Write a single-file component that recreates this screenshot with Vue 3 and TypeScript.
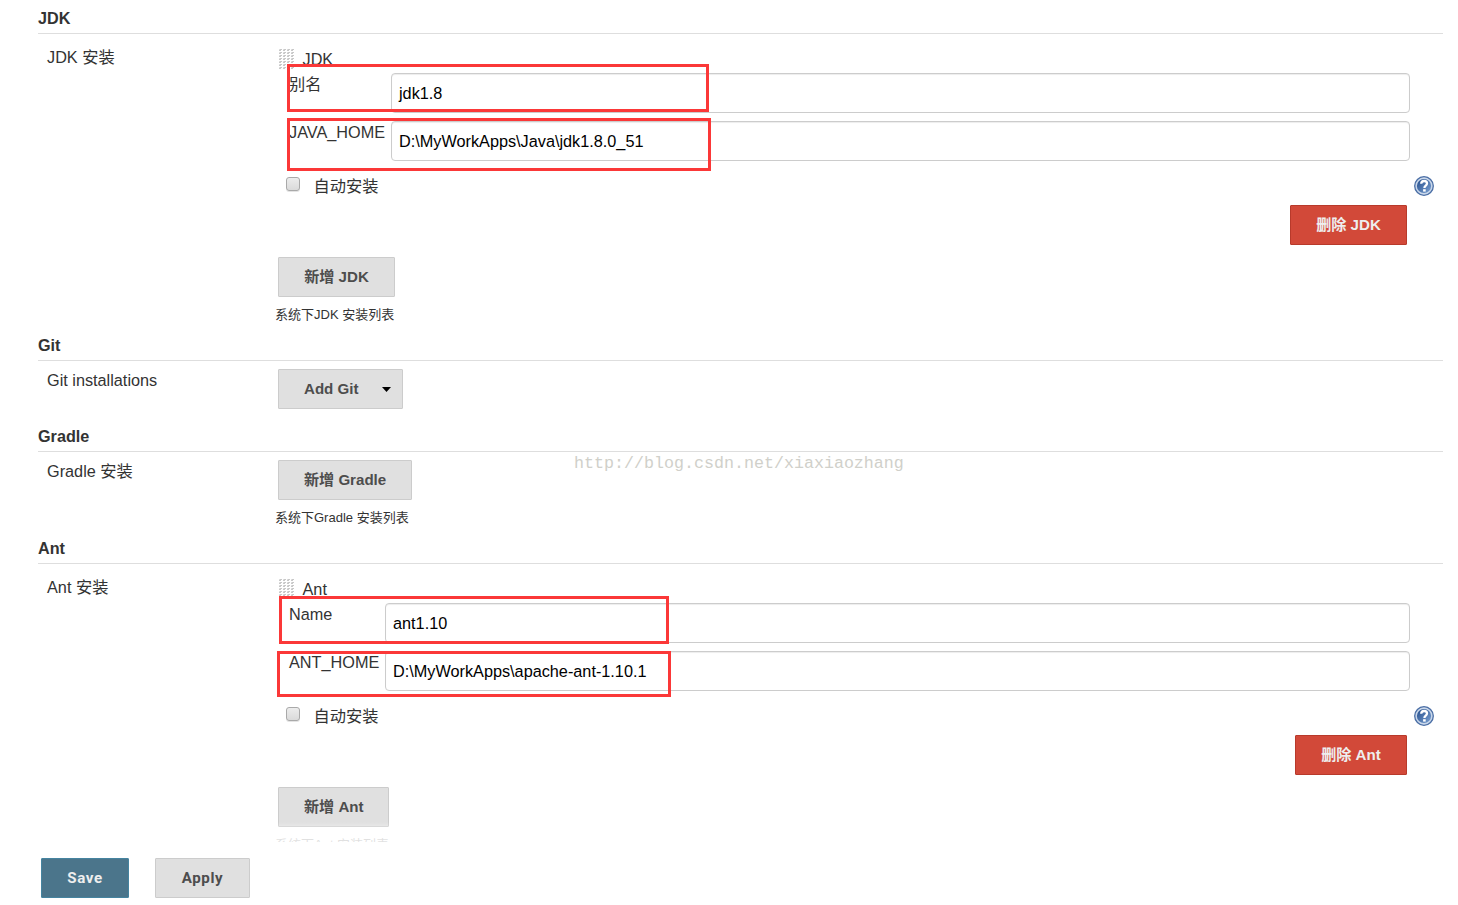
<script setup lang="ts">
interface Field {
  label: string
  value: string
}
interface Tool {
  key: string
  title: string
  label: string
  fields?: Field[]
  remove?: string
  add: string
  menu?: boolean
  note?: string
}

const tools: Tool[] = [
  {
    key: 'jdk',
    title: 'JDK',
    label: 'JDK 安装',
    fields: [
      { label: '别名', value: 'jdk1.8' },
      { label: 'JAVA_HOME', value: 'D:\\MyWorkApps\\Java\\jdk1.8.0_51' },
    ],
    remove: '删除 JDK',
    add: '新增 JDK',
    note: '系统下JDK 安装列表',
  },
  { key: 'git', title: 'Git', label: 'Git installations', add: 'Add Git', menu: true },
  { key: 'gradle', title: 'Gradle', label: 'Gradle 安装', add: '新增 Gradle', note: '系统下Gradle 安装列表' },
  {
    key: 'ant',
    title: 'Ant',
    label: 'Ant 安装',
    fields: [
      { label: 'Name', value: 'ant1.10' },
      { label: 'ANT_HOME', value: 'D:\\MyWorkApps\\apache-ant-1.10.1' },
    ],
    remove: '删除 Ant',
    add: '新增 Ant',
    note: '系统下Ant 安装列表',
  },
]
</script>

<template>
  <div class="page">
    <main class="config">
      <section v-for="t in tools" :key="t.key" class="tool" :class="t.key">
        <h2>{{ t.title }}</h2>
        <div class="body">
          <div class="label" :class="{ low: t.fields }">{{ t.label }}</div>
          <div class="content">
            <div v-if="t.fields" class="install">
              <div class="head">
                <svg class="grip" width="15" height="21" viewBox="0 0 15 21" shape-rendering="crispEdges">
                  <template v-for="r in 7" :key="r">
                    <template v-for="c in 4" :key="c">
                      <rect :x="c * 4 - 4" :y="r * 3 - 3" width="2" height="2" fill="#dedede" />
                      <rect :x="c * 4 - 3" :y="r * 3 - 3" width="2" height="1" fill="#c8c8c8" />
                      <rect :x="c * 4 - 4" :y="r * 3 - 2" width="2" height="1" fill="#c8c8c8" />
                    </template>
                  </template>
                </svg>
                <span>{{ t.title }}</span>
              </div>
              <div v-for="(f, i) in t.fields" :key="f.label" class="field">
                <label>{{ f.label }}</label>
                <div class="input">{{ f.value }}</div>
                <div class="mark" :class="'mark' + i"></div>
              </div>
              <div class="auto">
                <span class="check"></span>
                <span class="auto-text">自动安装</span>
                <svg class="help" width="20" height="20" viewBox="0 0 20 20">
                  <defs>
                    <linearGradient :id="'g-' + t.key" x1="0" y1="0" x2="1" y2="1">
                      <stop offset="0" stop-color="#244d8b" />
                      <stop offset="1" stop-color="#7ba1d2" />
                    </linearGradient>
                  </defs>
                  <circle cx="10" cy="10" r="9.3" fill="#c9d7ea" stroke="#4a6ea5" stroke-width="1.3" />
                  <circle cx="10" cy="10" r="7.1" :fill="'url(#g-' + t.key + ')'" />
                  <path d="M7.2 7.7C7.3 5.8 8.4 5 10.1 5c1.8 0 2.9.9 2.9 2.5 0 2.1-2.6 2-2.6 4.4" fill="none" stroke="#fff" stroke-width="2.3" />
                  <rect x="9.1" y="13.2" width="2.6" height="2.4" fill="#fff" />
                </svg>
              </div>
              <div class="remove"><button class="btn danger">{{ t.remove }}</button></div>
            </div>
            <button class="btn add" :class="{ menu: t.menu }">
              {{ t.add }}
              <svg v-if="t.menu" width="9" height="5" viewBox="0 0 9 5"><path d="M0 0H9L4.5 5Z" fill="#000" /></svg>
            </button>
            <div v-if="t.note" class="note">{{ t.note }}</div>
          </div>
        </div>
      </section>
    </main>
    <footer class="bar">
      <button class="btn primary">Save</button>
      <button class="btn">Apply</button>
    </footer>
    <div class="watermark">http://blog.csdn.net/xiaxiaozhang</div>
  </div>
</template>

<style>
body {
  margin: 0;
  background: #fff;
  overflow: hidden;
}
</style>

<style scoped>
.page {
  position: relative;
  display: flex;
  flex-direction: column;
  width: 1458px;
  height: 905px;
  overflow: hidden;
  box-sizing: border-box;
  background: #fff;
  color: #333;
  font: 16.25px/20px "Liberation Sans", "Noto Sans CJK SC", sans-serif;
}
.config {
  position: relative;
  box-sizing: border-box;
  height: 842px;
  overflow: hidden;
  padding: 0 15px 0 38px;
}
.config::after {
  content: "";
  position: absolute;
  left: 0;
  right: 0;
  bottom: 0;
  height: 20px;
  background: linear-gradient(rgba(255, 255, 255, 0), rgba(255, 255, 255, 0.85) 80%);
}
h2 {
  box-sizing: border-box;
  height: 34px;
  margin: 0;
  padding-top: 4px;
  border-bottom: 1px solid #dedede;
  font-size: 16.2px;
  line-height: 29px;
}
.body {
  display: grid;
  grid-template-columns: 240px 1fr;
}
.jdk .body { height: 293px; }
.git .body { height: 57px; }
.gradle .body { height: 78px; }
.ant .body { height: 293px; }
.label {
  padding: 9px 0 0 9px;
}
.label.low {
  padding-top: 13px;
}
.content {
  padding-top: 8px;
}
.install {
  height: 215px;
}
.head {
  display: flex;
  height: 31px;
  padding-left: 1px;
}
.grip {
  margin-top: 7px;
}
.head span {
  margin: 7px 0 0 8.5px;
}
.field {
  position: relative;
  display: flex;
  height: 40px;
  margin-bottom: 8px;
}
.field label {
  width: 102px;
  padding: 1px 0 0 11px;
}
.ant .field label {
  width: 96px;
}
.input {
  flex: 1;
  box-sizing: border-box;
  margin-right: 33px;
  padding: 0 7px;
  border: 1px solid #ccc;
  border-radius: 4px;
  box-shadow: inset 0 1px 1px rgba(0, 0, 0, 0.075);
  color: #000;
  line-height: 39px;
}
.mark {
  position: absolute;
  box-sizing: border-box;
  border: 3px solid #fb3838;
}
.jdk .mark0 { left: 9px; top: -9px; width: 422px; height: 48px; }
.jdk .mark1 { left: 9px; top: -3px; width: 424px; height: 53px; }
.ant .mark0 { left: 1px; top: -7px; width: 390px; height: 48px; }
.ant .mark1 { left: -1px; top: 0; width: 394px; height: 46px; }
.auto {
  display: flex;
  height: 36px;
  padding-left: 8px;
}
.check {
  box-sizing: border-box;
  width: 14px;
  height: 14px;
  margin-top: 8px;
  border: 1px solid #a9a9a9;
  border-radius: 3px;
  background: linear-gradient(#ececec, #dadada);
  box-shadow: 0 1px 0 #e4e4e4;
}
.auto-text {
  margin: 7px 0 0 13.5px;
}
.help {
  margin: 7px 9px 0 auto;
}
.remove {
  display: flex;
  justify-content: flex-end;
  padding-right: 36px;
}
.btn {
  display: block;
  box-sizing: border-box;
  height: 40px;
  margin: 0;
  padding: 0 25px;
  border: 1px solid #ccc;
  border-radius: 1px;
  background: #e0e0e0;
  color: #4d4d4d;
  font: bold 15.1px/38px "Liberation Sans", "Noto Sans CJK SC", sans-serif;
  white-space: nowrap;
}
.jdk .btn {
  width: 117px;
}
.ant .add {
  width: 111px;
}
.ant .danger {
  width: 112px;
}
.danger {
  border-color: #b83a2b;
  background: #d24939;
  color: #eee;
}
.menu {
  display: flex;
  align-items: center;
  gap: 23px;
  padding-right: 11px;
  width: 125px;
}
.note {
  margin: 8px 0 0 -3px;
  font-size: 13px;
}
.bar {
  display: flex;
  gap: 26px;
  padding: 16px 0 0 41px;
}
.bar .btn {
  width: 95px;
  padding: 0;
  font-family: Roboto, "Liberation Sans", sans-serif;
  letter-spacing: 0.6px;
}
.bar .primary {
  width: 88px;
  border-color: #4584a0;
  background: #4b758b;
  color: #eee;
}
.watermark {
  position: absolute;
  left: 574px;
  top: 454px;
  color: #d0d0ca;
  font: 16.67px/20px "Liberation Mono", monospace;
  white-space: nowrap;
}
</style>
